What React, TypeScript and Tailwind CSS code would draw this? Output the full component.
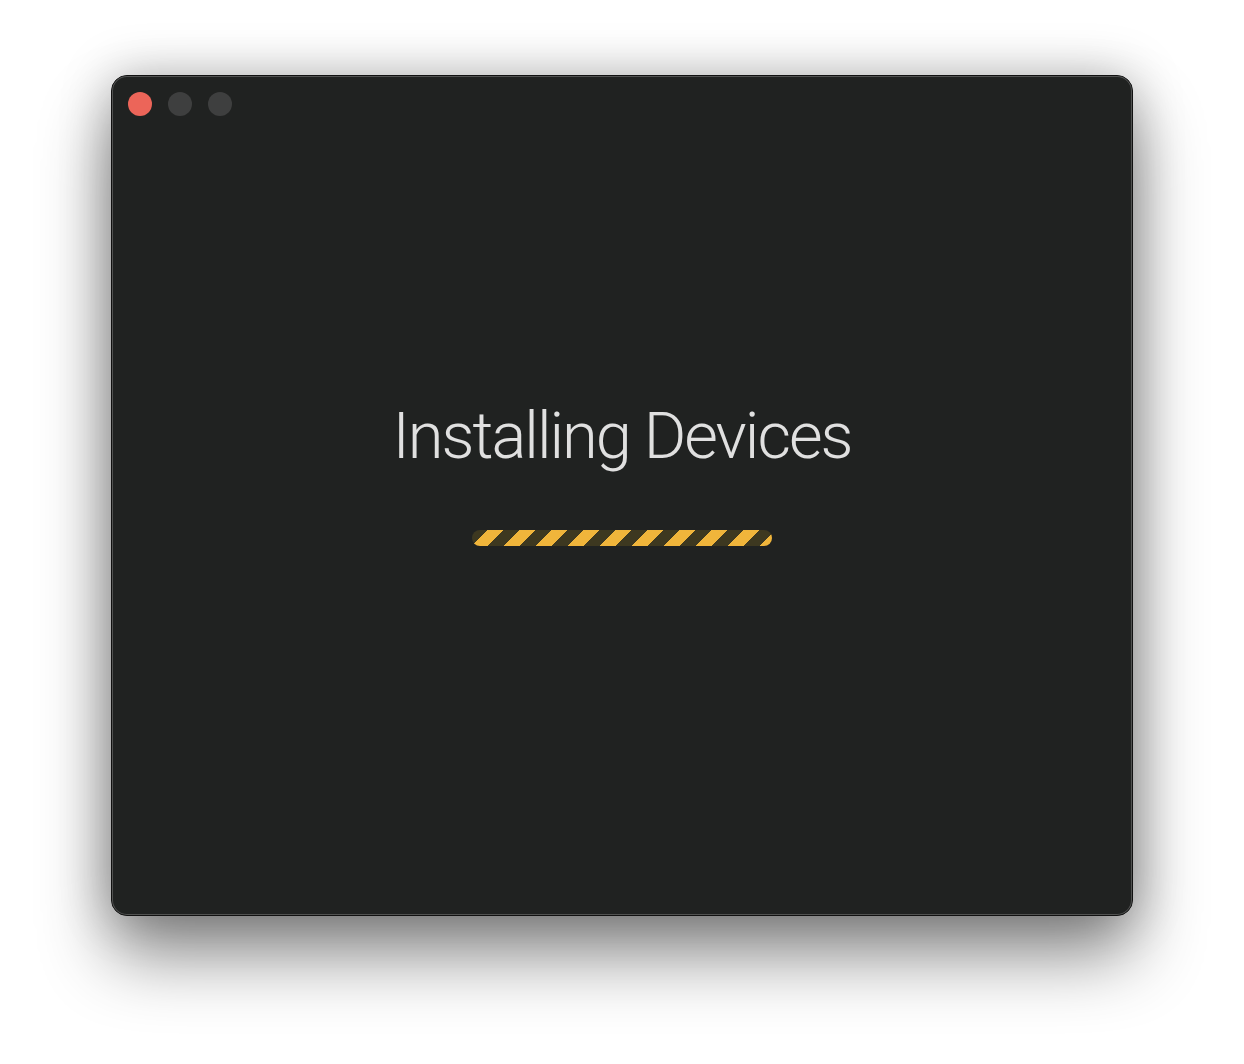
import React from "react";

export default function App() {
  return (
    <div className="min-h-[1064px] w-full bg-white flex justify-center pt-[75px]">
      <div className="relative w-[1022px] h-[841px] rounded-[16px] bg-[#202221] border border-[#111] shadow-[0_40px_70px_rgba(0,0,0,0.45),0_0_50px_rgba(0,0,0,0.25)] flex flex-col">
        <div className="absolute inset-0 rounded-[15px] shadow-[inset_0_0_0_1px_rgba(255,255,255,0.22)] pointer-events-none" />
        <div className="flex gap-4 pl-4 pt-4">
          <span className="w-6 h-6 rounded-full bg-[#ec6559]" />
          <span className="w-6 h-6 rounded-full bg-[#3e3f3f]" />
          <span className="w-6 h-6 rounded-full bg-[#3e3f3f]" />
        </div>
        <div className="flex flex-col items-center pt-[280px]">
          <h1 className="text-[#e0e0e0] text-[65px] leading-[80px] font-light tracking-[-2px] font-['Roboto',sans-serif]">
            Installing Devices
          </h1>
          <div className="mt-[54px] w-[300px] h-4 rounded-full overflow-hidden bg-[#3d3820] bg-[repeating-linear-gradient(135deg,#3d3820_0px,#3d3820_11.3px,#f0b53b_11.3px,#f0b53b_22.6px)]" />
        </div>
      </div>
    </div>
  );
}
